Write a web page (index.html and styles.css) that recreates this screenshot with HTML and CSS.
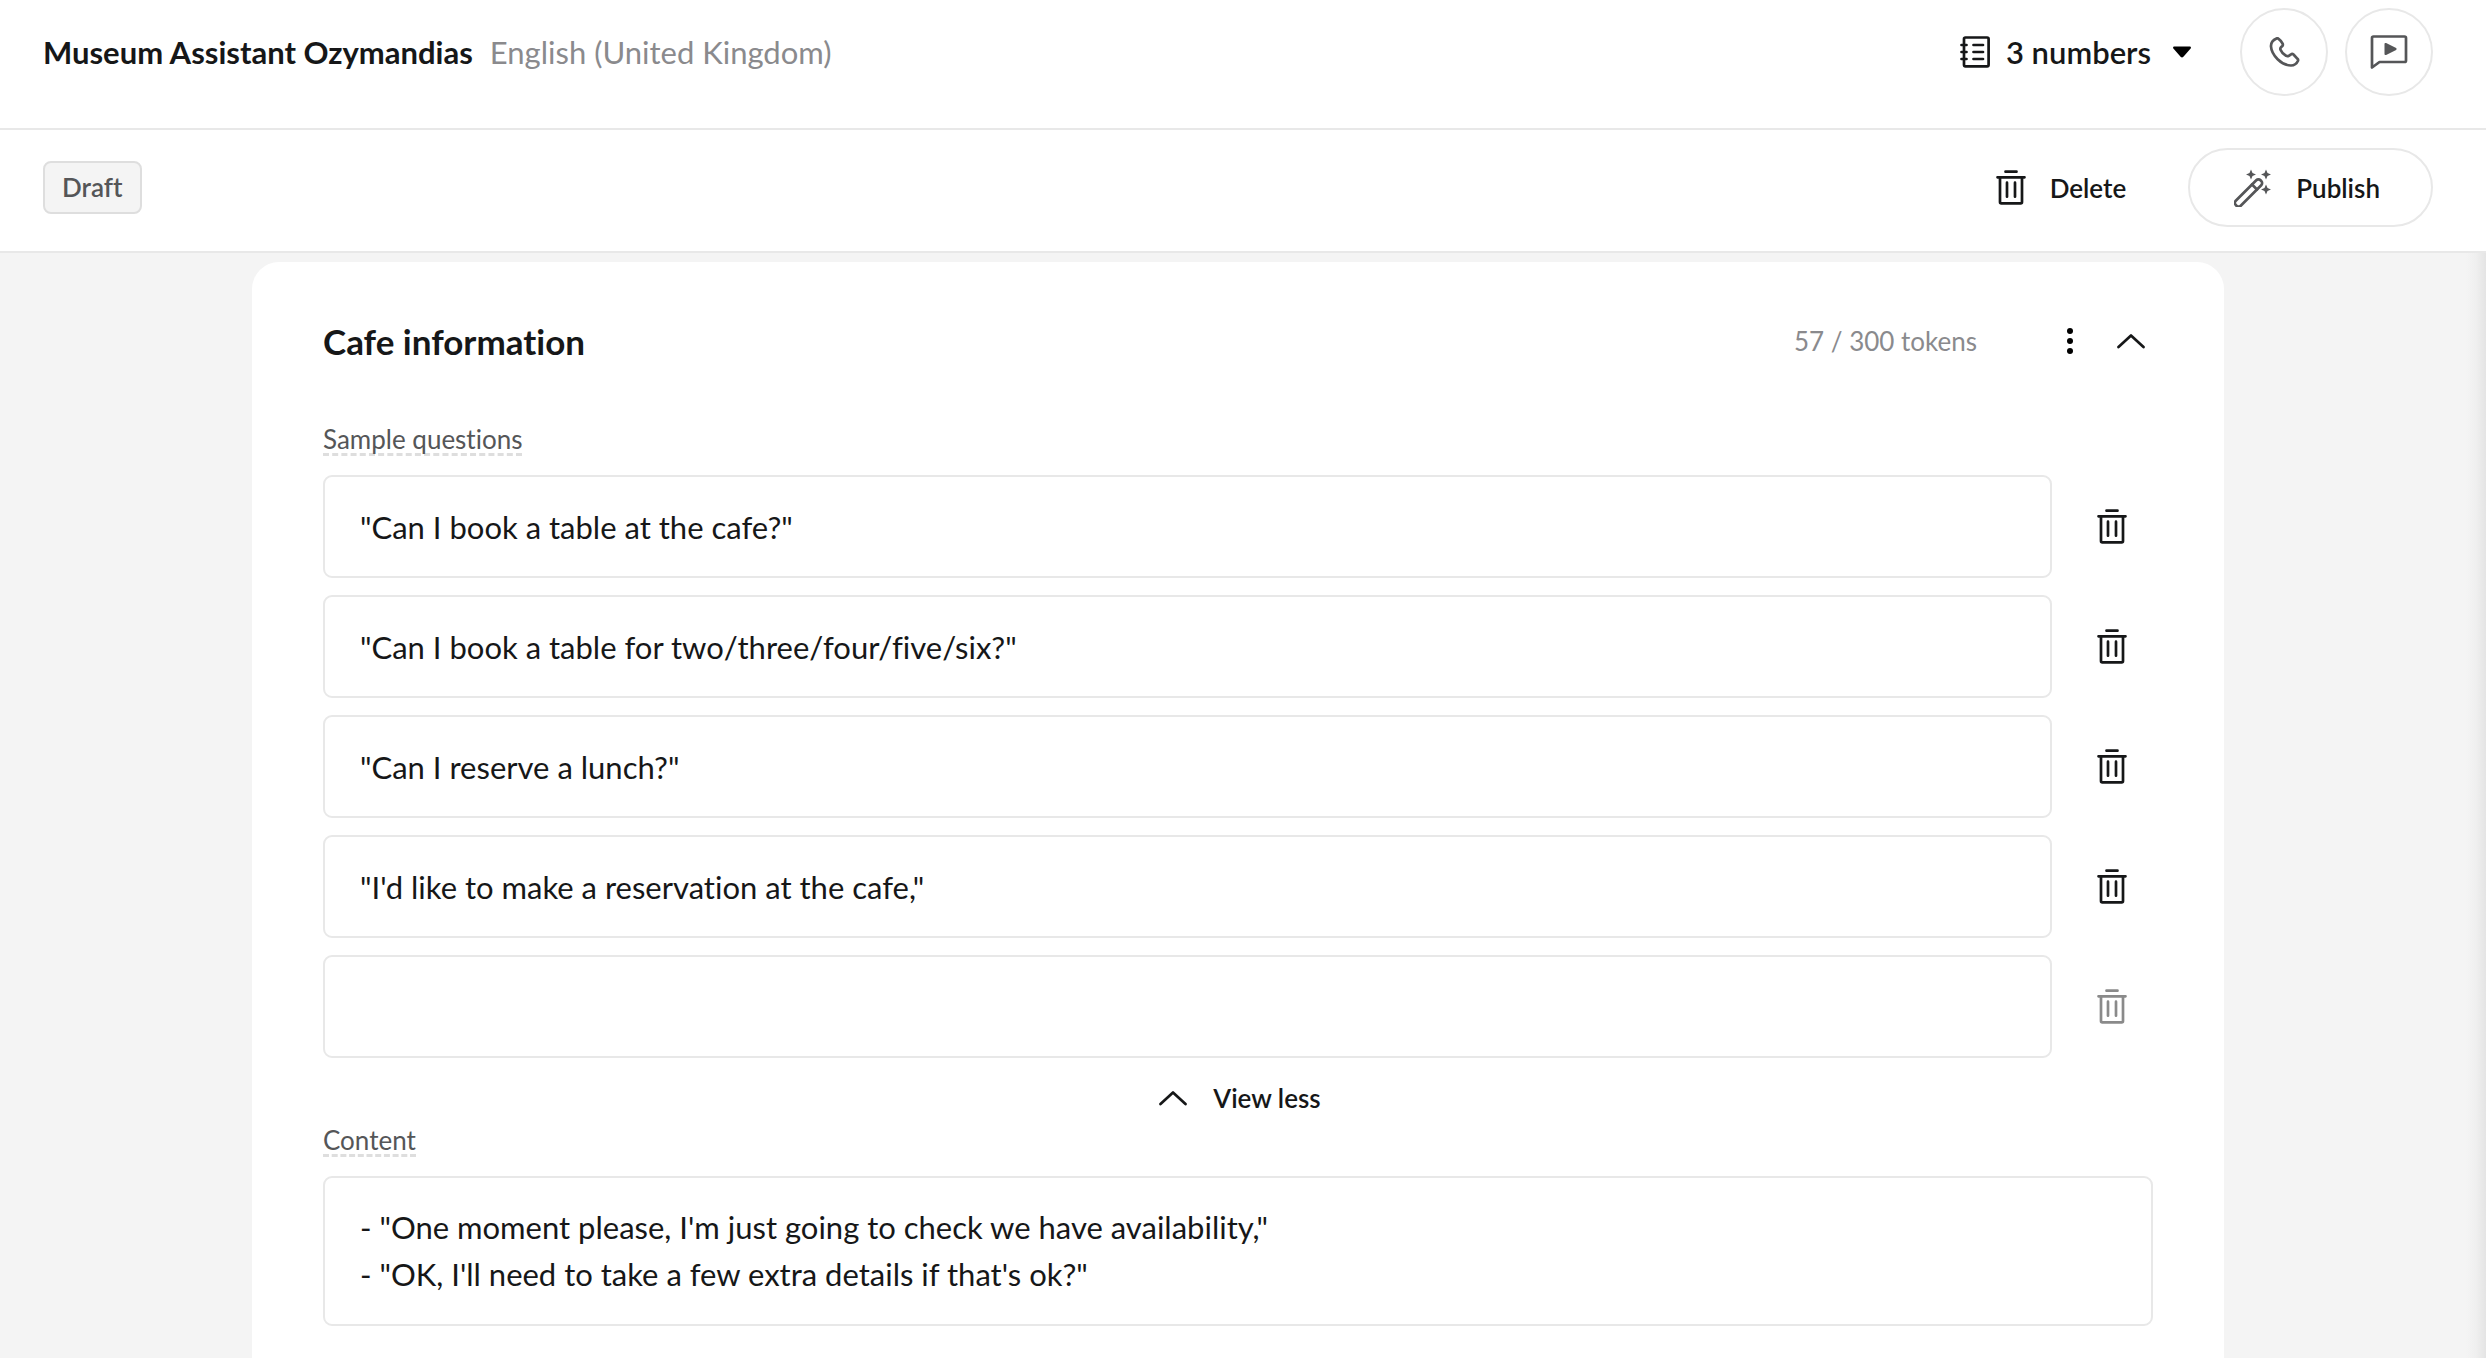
FILE: index.html
```html
<!DOCTYPE html>
<html lang="en">
<head>
<meta charset="utf-8">
<title>Museum Assistant Ozymandias</title>
<link rel="stylesheet" href="styles.css">
</head>
<body>
<!-- shared icons -->
<svg class="sprite" aria-hidden="true">
  <symbol id="trash" viewBox="0 0 30 35">
    <path d="M9.5 1.7h11M1.5 7.3h27M4 7.3V32q0 1.3 1.3 1.3h19.4q1.3 0 1.3-1.3V7.3M11 12.7v14M19 12.7v14"/>
  </symbol>
  <symbol id="chevron" viewBox="0 0 28 16">
    <path d="M1.5 14 14 2.5 26.5 14"/>
  </symbol>
</svg>

<header class="topbar">
  <h1>Museum Assistant Ozymandias</h1>
  <span class="language">English (United Kingdom)</span>
  <button class="numbers" type="button">
    <svg class="icon" width="30" height="32" viewBox="0 0 30 32"><rect x="4" y="1.5" width="24.6" height="28.8" rx="1.5"/><path d="M1.5 9h5M1.5 16h5M1.5 23h5M13.5 9H23M13.5 16H23M13.5 23H23"/></svg>
    3 numbers
    <svg class="caret" width="20" height="12" viewBox="0 0 20 12"><path d="M1.8.5h16.400q1.400.6.4 2l-7.200 8.300q-1.400 1.200-2.800 0L1.400 2.500q-1-1.400.4-2z"/></svg>
  </button>
  <button class="round" type="button" aria-label="Call">
    <svg class="icon" width="31" height="31" viewBox="0 0 31 31"><path d="M7.5 1.500C4 3 1.800 6 2 9.500 2.500 18 12.500 28.500 22 28.500c3.500 0 6-2.500 7-4.700.3-.8 0-1.500-.5-2l-4-4.300c-.9-.8-1.700-.8-2.500-.2l-2.200 1.500c-1 .6-2 .4-2.800-.1-2.700-1.400-4.500-3.400-5.500-5.900-.3-.8-.2-1.800.5-2.500L13.300 9c.7-.8.7-1.600.3-2.400C12.500 4.500 11 2.800 9.300 1.600c-.5-.4-1.100-.4-1.800-.1z"/></svg>
  </button>
  <button class="round" type="button" aria-label="Test chat">
    <svg class="icon" width="38" height="36" viewBox="0 0 38 36"><path d="M2 33.500V4q0-1.500 1.500-1.500h31Q36 2.500 36 4v22.500q0 1.500-1.500 1.500H9.500z"/><path class="fill" d="M14.500 10q0-1.500 1.600-.9l10 5q1.200.9 0 1.800l-10 5q-1.600.6-1.600-.9z"/></svg>
  </button>
</header>

<div class="toolbar">
  <span class="badge">Draft</span>
  <button class="delete" type="button">
    <svg class="icon" width="30" height="35"><use href="#trash"/></svg>
    Delete
  </button>
  <button class="publish" type="button">
    <svg class="icon" width="38" height="38" viewBox="0 0 38 38"><rect x="-3.5" y="-17.5" width="7" height="35" rx="3" transform="translate(14.5 24) rotate(45)"/><path d="m18 15.500 5 5"/><path class="fill" d="M17 .5l1.500 3.500 3.500 1.500L18.500 7 17 10.500 15.500 7 12 5.500 15.500 4zM32 .5l1.500 3.500 3.500 1.500L33.500 7 32 10.500 30.500 7 27 5.500 30.500 4zM32 15.500l1.500 3.500 3.500 1.500-3.500 1.500-1.500 3.500-1.500-3.500-3.500-1.500 3.500-1.500z"/></svg>
    Publish
  </button>
</div>

<main>
  <form class="card">
    <div class="card-head">
      <h2>Cafe information</h2>
      <span class="tokens">57 / 300 tokens</span>
      <button class="more" type="button" aria-label="More">
        <svg width="8" height="28" viewBox="0 0 8 28"><circle cx="4" cy="4" r="3"/><circle cx="4" cy="14" r="3"/><circle cx="4" cy="24" r="3"/></svg>
      </button>
      <button type="button" aria-label="Collapse">
        <svg class="icon" width="28" height="16"><use href="#chevron"/></svg>
      </button>
    </div>

    <label class="caption" for="q1">Sample questions</label>
    <ul class="questions">
      <li>
        <input id="q1" type="text" value='"Can I book a table at the cafe?"'>
        <button type="button" aria-label="Delete question"><svg class="icon" width="30" height="35"><use href="#trash"/></svg></button>
      </li>
      <li>
        <input type="text" aria-label="Question 2" value='"Can I book a table for two/three/four/five/six?"'>
        <button type="button" aria-label="Delete question"><svg class="icon" width="30" height="35"><use href="#trash"/></svg></button>
      </li>
      <li>
        <input type="text" aria-label="Question 3" value='"Can I reserve a lunch?"'>
        <button type="button" aria-label="Delete question"><svg class="icon" width="30" height="35"><use href="#trash"/></svg></button>
      </li>
      <li>
        <input type="text" aria-label="Question 4" value="&quot;I'd like to make a reservation at the cafe,&quot;">
        <button type="button" aria-label="Delete question"><svg class="icon" width="30" height="35"><use href="#trash"/></svg></button>
      </li>
      <li>
        <input type="text" aria-label="Question 5">
        <button type="button" aria-label="Delete question" disabled><svg class="icon" width="30" height="35"><use href="#trash"/></svg></button>
      </li>
    </ul>

    <button class="view-less" type="button">
      <svg class="icon" width="28" height="16"><use href="#chevron"/></svg>
      View less
    </button>

    <label class="caption" for="content">Content</label>
    <textarea id="content" rows="2">- "One moment please, I'm just going to check we have availability,"
- "OK, I'll need to take a few extra details if that's ok?"</textarea>
  </form>
</main>
<div class="edge"></div>
</body>
</html>
```
FILE: styles.css
```css
* {
	box-sizing:border-box;
}
body {
	margin:0;
	min-height:100vh;
	background-color:#f4f4f4;
	font-family:Lato, "Liberation Sans", sans-serif;
	font-size:31px;
	font-variant-ligatures:none;
	color:#161718;
	overflow-x:hidden;
}
/* page scrolls without a visible bar */
html {
	scrollbar-width:none;
}
h1, h2, ul {
	margin:0;
	padding:0;
	list-style:none;
}
button {
	display:flex;
	align-items:center;
	padding:0;
	border:0;
	background:none;
	font:inherit;
	color:inherit;
	cursor:pointer;
}
.sprite {
	position:absolute;
	width:0;
	height:0;
}
.icon {
	flex:none;
	fill:none;
	stroke:currentColor;
	stroke-width:2.7;
	stroke-linecap:round;
	stroke-linejoin:round;
}
.icon .fill {
	fill:currentColor;
	stroke:none;
}

/* header */
.topbar {
	display:flex;
	align-items:center;
	padding:8px 53px 32px 43px;
	border-bottom:2px solid #e8e8e8;
	background-color:#fff;
}
.topbar h1 {
	font-size:31px;
	font-weight:700;
}
.language {
	margin-left:17px;
	color:#8a8a8d;
}
.numbers {
	gap:16px;
	margin-left:auto;
	margin-right:48px;
	font-weight:600;
}
.caret {
	margin-left:5px;
}
.round {
	justify-content:center;
	width:88px;
	height:88px;
	border:2px solid #e8e8e8;
	border-radius:50%;
	color:#555658;
}
.round + .round {
	margin-left:17px;
}

/* toolbar */
.toolbar {
	display:flex;
	align-items:center;
	padding:18px 53px 24px 43px;
	border-bottom:2px solid #e8e8e8;
	background-color:#fff;
	font-size:26px;
	font-weight:600;
}
.badge {
	padding:0 17px;
	border:2px solid #dedede;
	border-radius:8px;
	background-color:#f4f4f4;
	line-height:49px;
	color:#555658;
}
.delete {
	gap:24px;
	margin-left:auto;
	margin-right:62px;
}
.publish {
	gap:24px;
	padding:0 51px 0 44px;
	height:79px;
	border:2px solid #e8e8e8;
	border-radius:40px;
}
.publish .icon {
	color:#555658;
}

/* card */
main {
	padding:9px 262px 0 252px;
}
.card {
	padding:54px 71px 71px;
	border-radius:27px;
	background-color:#fff;
}
.card-head {
	display:flex;
	align-items:center;
	margin-bottom:59px;
	padding-right:8px;
	line-height:50px;
}
.card-head h2 {
	font-size:35px;
	font-weight:700;
}
.tokens {
	margin-left:auto;
	font-size:26px;
	color:#8a8a8d;
}
.more {
	margin:0 43px 0 89px;
}
.caption {
	display:block;
	width:fit-content;
	margin-bottom:19px;
	border-bottom:3px dashed #dedede;
	font-size:26px;
	line-height:28px;
	color:#555658;
}
.questions li {
	display:flex;
	align-items:center;
	gap:45px;
	margin-bottom:17px;
	padding-right:26px;
}
input, textarea {
	display:block;
	width:100%;
	border:2px solid #e8e8e8;
	border-radius:9px;
	background-color:#fff;
	font:inherit;
	color:inherit;
}
input {
	flex:1;
	min-width:0;
	height:103px;
	padding:0 35px;
}
textarea {
	padding:26px 35px;
	line-height:47px;
	resize:none;
}
button:disabled {
	color:#8a8a8a;
}
.view-less {
	gap:26px;
	margin:0 auto 5px;
	padding-left:4px;
	font-size:26px;
	line-height:46px;
	font-weight:600;
}

/* shadow of the side panel */
.edge {
	position:fixed;
	top:253px;
	right:0;
	bottom:0;
	width:20px;
	background:linear-gradient(to right, #f4f4f4, #efefef 50%, #e4e4e4);
}
```
